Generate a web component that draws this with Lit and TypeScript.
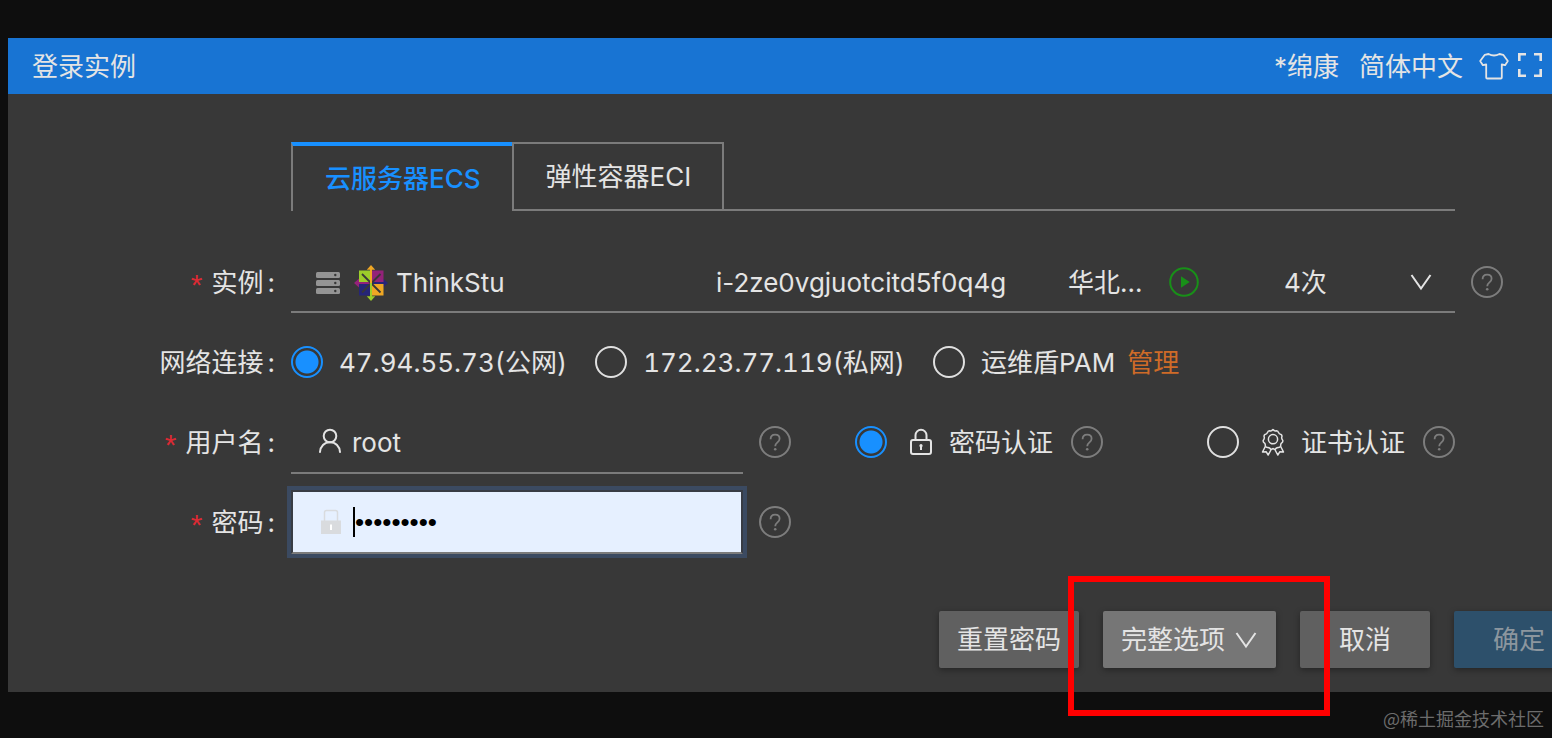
import { LitElement, html, svg, css } from "lit";
import { customElement, property } from "lit/decorators.js";

const icons: Record<string, unknown> = {
  help: svg`<svg viewBox="0 0 32 32" width="32" height="32" fill="none" stroke="currentColor" stroke-width="2">
    <circle cx="16" cy="16" r="15" />
    <path d="M11.6 13.2c0-2.7 1.8-4.6 4.5-4.6s4.5 1.8 4.5 4.2c0 3.5-4.4 3.7-4.4 7.4" stroke-width="1.8" />
    <circle cx="16.2" cy="23.2" r="1.3" fill="currentColor" stroke="none" />
  </svg>`,
  user: svg`<svg viewBox="0 0 24 26" width="24" height="26" fill="none" stroke="currentColor" stroke-width="2" stroke-linecap="round">
    <circle cx="12" cy="8" r="6.3" />
    <path d="M2 24c.4-5.600 4.300-9.700 10-9.700S21.600 18.400 22 24" />
  </svg>`,
  lock: svg`<svg viewBox="0 0 24 28" width="24" height="28" fill="none" stroke="currentColor" stroke-width="2">
    <rect x="2" y="12" width="20" height="14" rx="2" />
    <path d="M6.500 12V7.300a5.500 5.500 0 0 1 11 0V12" />
    <circle cx="12" cy="17.700" r="1.600" fill="currentColor" stroke="none" />
    <path d="M12 18v4" />
  </svg>`,
  lockFilled: svg`<svg viewBox="0 0 22 26" width="22" height="26" fill="none" stroke="currentColor" stroke-width="1.500">
    <rect x="1" y="11.500" width="20" height="13.500" fill="currentColor" stroke="none" />
    <path d="M4.500 12V3.500q0-2 2-2h9q2 0 2 2V12" />
    <path d="M11 15.500v5.500" stroke="#fff" stroke-width="2" />
  </svg>`,
  medal: svg`<svg viewBox="0 0 24 28" width="24" height="28" fill="none" stroke="currentColor" stroke-width="1.500" stroke-linejoin="round">
    <path d="M12 1.500q1.500 2 3.300 1.200 1.800-.2 2.200 1.900.6 1.600 2.400 1.800 1.600 1 .8 2.900-.2 1.700 1 2.900.6 1.800-1.200 2.900-1.100 1.300-.8 2.900-.8 1.700-2.700 1.400-1.700.2-2.600 1.600-1.300.7-2.400-.5-1.100 1.200-2.400.5-.9-1.400-2.600-1.600-1.900.3-2.700-1.400.3-1.600-.8-2.900-1.800-1.100-1.200-2.900 1.200-1.200 1-2.900-.8-1.900.8-2.900 1.800-.2 2.400-1.800.4-2.100 2.200-1.900Q10.500 3.500 12 1.500z" />
    <circle cx="12" cy="11.200" r="4.600" />
    <path d="M4.300 18.500L1.500 24l3.600-.3L7.200 27l3.200-6M19.700 18.500l2.800 5.500-3.600-.3L16.800 27l-3.200-6" />
  </svg>`,
  shirt: svg`<svg viewBox="0 0 30 28" width="30" height="28" fill="none" stroke="currentColor" stroke-width="1.800" stroke-linejoin="round">
    <path d="M9.500 2l-3.700.8L1.200 9l2.700 4.200 3.300-.7V25.500q0 1 1 1h13.600q1 0 1-1V12.500l3.300.7L28.800 9l-4.600-6.200L20.500 2Q15 5 9.500 2z" />
  </svg>`,
  fullscreen: svg`<svg viewBox="0 0 26 26" width="26" height="26" fill="none" stroke="currentColor" stroke-width="2.600">
    <path d="M2.300 9V2.300H9M17 2.300h6.700V9M23.700 17v6.700H17M9 23.700H2.300V17" />
  </svg>`,
  chevron: svg`<svg viewBox="0 0 22 18" width="22" height="18" fill="none" stroke="currentColor" stroke-width="2">
    <path d="M1.500 2L11 15.500 20.500 2" />
  </svg>`,
  play: svg`<svg viewBox="0 0 30 30" width="30" height="30" fill="none" stroke="currentColor" stroke-width="2">
    <circle cx="15" cy="15" r="13.800" />
    <path d="M12 9.300v11.400l8.700-5.700z" fill="currentColor" stroke="none" />
  </svg>`,
  server: svg`<svg viewBox="0 0 24 22" width="24" height="22" fill="#949494">
    <rect width="24" height="6" rx="1.500" /><rect y="8" width="24" height="6" rx="1.500" /><rect y="16" width="24" height="6" rx="1.500" />
    <g fill="#383838"><circle cx="19.300" cy="3" r="1.200" /><circle cx="19.300" cy="11" r="1.200" /><circle cx="19.300" cy="19" r="1.200" /></g>
  </svg>`,
  centos: svg`<svg viewBox="0 0 34 36" width="34" height="36">
    <path d="M0 18l5-4.500v3.500h12v2H5v3.500z" fill="#932279" />
    <path d="M34 18l-5-4.500v3.500H17v2h12v3.500z" fill="#262577" />
    <rect x="5" y="5.500" width="11" height="11.500" fill="#9ccd2a" />
    <rect x="18" y="5.500" width="11.500" height="11.500" fill="#932279" />
    <rect x="5" y="19" width="11" height="11.500" fill="#262577" />
    <rect x="18" y="19" width="11.500" height="11.500" fill="#efa724" />
    <path d="M8 9L26.500 27.500M26.500 9L8 27.500" stroke="#383838" stroke-width="1.800" />
    <path d="M17 3v15" stroke="#efa724" stroke-width="2" /><path d="M17 0l4.200 4.700h-8.400z" fill="#efa724" />
    <path d="M17 18v15" stroke="#9ccd2a" stroke-width="2" /><path d="M17 36l4.200-4.700h-8.400z" fill="#9ccd2a" />
  </svg>`,
};

@customElement("ui-icon")
export class UiIcon extends LitElement {
  @property() name = "help";
  static styles = css`
    :host { display: inline-flex; flex: none; }
    svg { display: block; }
  `;
  render() {
    return icons[this.name];
  }
}

@customElement("app-root")
export class AppRoot extends LitElement {
  static styles = css`
    :host {
      display: block;
      box-sizing: border-box;
      min-height: 100vh;
      padding: 38px 0 0 8px;
      overflow: hidden;
      background: #0e0e0e;
      color: #e4e4e4;
      font: 400 26px/40px Inter, "Noto Sans CJK SC", sans-serif;
    }
    * { box-sizing: border-box; }
    button, input, select { font: inherit; color: inherit; margin: 0; }
    .dialog { background: #383838; }
    .header {
      display: flex;
      align-items: center;
      gap: 16px;
      height: 56px;
      padding: 0 9px 0 24px;
      background: #1874d3;
    }
    .title { flex: 1; margin: 0; padding-top: 2px; font-size: 26px; font-weight: 400; }
    .plain { display: inline-flex; padding: 0; border: 0; background: none; white-space: nowrap; cursor: pointer; }
    .word { padding-top: 2px; }
    .account { margin-right: 4px; }
    .tools { display: flex; gap: 8px; }
    .form { padding: 48px 97px 0 0; }
    .tabs { display: flex; margin-left: 283px; }
    .tab {
      height: 69px;
      padding: 0 31px 0 32px;
      border: 2px solid #7b7b7b;
      background: none;
      white-space: nowrap;
    }
    .tab.active {
      border-top: 4px solid #1890ff;
      border-right: 0;
      border-bottom: 0;
      color: #1890ff;
      font-weight: 500;
    }
    .rest { flex: 1; border-bottom: 2px solid #7b7b7b; }
    .rows { display: grid; gap: 16px; padding-top: 39px; }
    .row { display: grid; grid-template-columns: 267px 1fr; column-gap: 16px; height: 64px; align-items: center; }
    .label { display: flex; align-items: center; justify-content: flex-end; gap: 9px; padding-top: 2px; white-space: nowrap; }
    .colon { margin-left: 4px; }
    .required { padding-top: 4px; color: #dc2a34; font-family: "Liberation Sans", sans-serif; font-size: 30px; }
    .help { color: #7d7d7d; }
    .with-help { display: grid; grid-template-columns: minmax(0, 1fr) 32px; column-gap: 16px; align-items: center; }
    .wide { margin-right: -48px; }
    .instance { display: grid; height: 62px; border-bottom: 2px solid #7b7b7b; }
    .instance > * { grid-area: 1 / 1; }
    .instance select { width: 100%; border: 0; background: none; appearance: none; padding: 4px 44px 0 105px; outline: 0; }
    .cells {
      display: grid;
      grid-template-columns: 425fr 352fr 101fr 115fr 126fr 45fr;
      align-items: center;
      padding-top: 2px;
      white-space: nowrap;
      pointer-events: none;
    }
    .cells span { padding-top: 2px; }
    .cells .marks { display: flex; align-items: center; gap: 14px; padding-left: 25px; }
    .play { color: #189018; }
    .radios { display: flex; align-items: center; gap: 28px; white-space: nowrap; font-variant-numeric: tabular-nums; }
    .option { display: flex; align-items: center; gap: 16px; }
    .text { padding-top: 2px; }
    .option input {
      appearance: none;
      flex: none;
      width: 32px;
      height: 32px;
      border: 2px solid #e0e0e0;
      border-radius: 50%;
    }
    .option input:checked {
      border-color: #1890ff;
      background: radial-gradient(circle, #1890ff 11px, transparent 12px);
    }
    .pam { display: flex; gap: 12px; }
    .link { padding-top: 2px; color: #ce6b28; text-decoration: none; }
    .halves { display: grid; grid-template-columns: minmax(0, 5fr) minmax(0, 6fr); column-gap: 64px; align-items: center; }
    .auth { display: flex; justify-content: space-between; white-space: nowrap; }
    .mark { margin-left: 6px; }
    .option .help { margin-left: 2px; }
    .field { display: flex; align-items: center; gap: 10px; height: 64px; padding-left: 27px; border-bottom: 2px solid #7b7b7b; }
    .field input { flex: 1; min-width: 0; height: 60px; padding: 2px 0 0; border: 0; background: none; outline: 0; }
    .focused {
      border: 2px solid #383c44;
      border-bottom-color: #7b7b7b;
      background: #e6f0ff;
      color: #d9dbde;
      box-shadow: 0 0 0 4px #3b4a61;
      gap: 0;
    }
    .caret { flex: none; width: 2px; height: 30px; margin-left: 11px; background: #000; }
    .field .secret { padding: 0; color: #000; font-family: "Liberation Sans", sans-serif; }
    .footer {
      display: flex;
      justify-content: flex-end;
      gap: 24px;
      margin-right: -32px;
      padding: 57px 0 24px;
    }
    .btn {
      height: 57px;
      padding: 1px 18px 0;
      border: 0;
      border-radius: 2px;
      background: #606060;
      box-shadow: 0 2px 6px rgba(0, 0, 0, 0.35);
      white-space: nowrap;
    }
    .more { display: flex; align-items: center; gap: 10px; padding-right: 19px; background: #767676; }
    .narrow { padding: 1px 39px 0; }
    .primary { background: #2d506b; color: #8c969e; }
    .spot { position: relative; }
    .frame { position: absolute; z-index: 1; inset: -35px -54px -48px -35px; border: 6px solid #f00; pointer-events: none; }
    .credit { margin: 0; padding: 6px 8px 0 0; text-align: right; font-family: "Noto Sans CJK SC", sans-serif; font-size: 18px; color: #6c6c6c; }
  `;

  private label(text: string, target: string, required = true) {
    return html`<label class="label" for=${target}>
      ${required ? html`<span class="required">*</span>` : null}<span>${text}<span class="colon">:</span></span>
    </label>`;
  }

  private help(subject: string) {
    return html`<button class="plain help" aria-label=${`${subject}帮助`}><ui-icon name="help"></ui-icon></button>`;
  }

  render() {
    return html`
      <main class="dialog">
        <header class="header">
          <h1 class="title">登录实例</h1>
          <button class="plain word account">*绵康</button>
          <button class="plain word">简体中文</button>
          <div class="tools">
            <button class="plain" aria-label="主题"><ui-icon name="shirt"></ui-icon></button>
            <button class="plain" aria-label="全屏"><ui-icon name="fullscreen"></ui-icon></button>
          </div>
        </header>
        <div class="form">
          <div class="tabs" role="tablist">
            <button class="tab active" role="tab" aria-selected="true">云服务器ECS</button>
            <button class="tab" role="tab" aria-selected="false">弹性容器ECI</button>
            <span class="rest"></span>
          </div>
          <div class="rows">
            <div class="row">
              ${this.label("实例", "instance")}
              <div class="with-help wide">
                <div class="instance">
                  <select id="instance"><option>ThinkStu</option></select>
                  <div class="cells">
                    <span class="marks"><ui-icon name="server"></ui-icon><ui-icon name="centos"></ui-icon></span>
                    <span>i-2ze0vgjuotcitd5f0q4g</span>
                    <span>华北...</span>
                    <ui-icon class="play" name="play"></ui-icon>
                    <span>4次</span>
                    <ui-icon name="chevron"></ui-icon>
                  </div>
                </div>
                ${this.help("实例")}
              </div>
            </div>
            <div class="row">
              ${this.label("网络连接", "public", false)}
              <div class="radios">
                <label class="option"><input id="public" type="radio" name="net" checked /><span class="text">47.94.55.73(公网)</span></label>
                <label class="option"><input type="radio" name="net" /><span class="text">172.23.77.119(私网)</span></label>
                <div class="pam">
                  <label class="option"><input type="radio" name="net" /><span class="text">运维盾PAM</span></label>
                  <a class="link" href="#">管理</a>
                </div>
              </div>
            </div>
            <div class="row">
              ${this.label("用户名", "user")}
              <div class="halves">
                <div class="with-help">
                  <div class="field"><ui-icon name="user"></ui-icon><input id="user" value="root" /></div>
                  ${this.help("用户名")}
                </div>
                <div class="auth">
                  <div class="option">
                    <label class="option">
                      <input type="radio" name="auth" checked /><ui-icon class="mark" name="lock"></ui-icon><span class="text">密码认证</span>
                    </label>
                    ${this.help("密码认证")}
                  </div>
                  <div class="option">
                    <label class="option">
                      <input type="radio" name="auth" /><ui-icon class="mark" name="medal"></ui-icon><span class="text">证书认证</span>
                    </label>
                    ${this.help("证书认证")}
                  </div>
                </div>
              </div>
            </div>
            <div class="row">
              ${this.label("密码", "password")}
              <div class="halves">
                <div class="with-help">
                  <div class="field focused">
                    <ui-icon name="lockFilled"></ui-icon><span class="caret"></span>
                    <input class="secret" id="password" type="password" value="password1" />
                  </div>
                  ${this.help("密码")}
                </div>
              </div>
            </div>
          </div>
        </div>
        <footer class="footer">
          <button class="btn">重置密码</button>
          <div class="spot">
            <button class="btn more">完整选项<ui-icon name="chevron"></ui-icon></button>
            <span class="frame"></span>
          </div>
          <button class="btn narrow">取消</button>
          <button class="btn narrow primary">确定</button>
        </footer>
      </main>
      <p class="credit">@稀土掘金技术社区</p>
    `;
  }
}
